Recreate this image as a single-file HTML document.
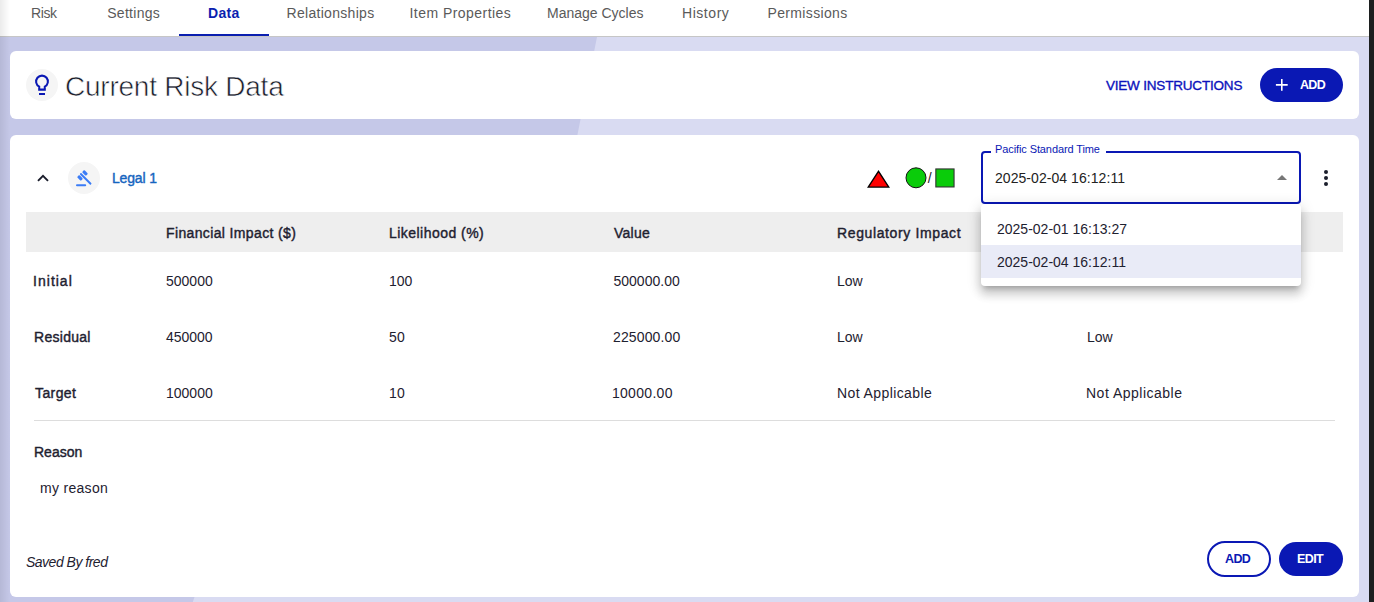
<!DOCTYPE html>
<html><head><meta charset="utf-8">
<style>
*{box-sizing:border-box;margin:0;padding:0}
html,body{width:1374px;height:602px;overflow:hidden;background:#fff}
body{font-family:"Liberation Sans",sans-serif;color:#222;position:relative}
.abs{position:absolute;white-space:nowrap}
#bg{position:absolute;left:0;top:37px;width:1369px;height:565px;background:#d9dbf2}
#bgdark{position:absolute;left:0;top:0;width:1369px;height:565px;background:#c5c8e8;
  clip-path:polygon(0 0,597px 0,577.4px 98px,194.5px 560px,192.8px 565px,0 565px)}
#tabs{position:absolute;left:0;top:0;width:1369px;height:37px;background:#fff;border-bottom:1px solid #c6c6c6}
.tab{position:absolute;top:5px;font-size:14px;color:#5a5a5a;white-space:nowrap}
.tab.act{color:#0b1fb0;font-weight:bold}
#uline{position:absolute;left:179px;top:34px;width:90px;height:2px;background:#0b1fb0}
#lshadow{position:absolute;left:0;top:0;width:10px;height:602px;background:linear-gradient(to right,rgba(0,0,0,.08),rgba(0,0,0,0))}
#scroll{position:absolute;left:1369px;top:0;width:5px;height:602px;background:#1c1f1f}
.card{position:absolute;left:10px;width:1349px;background:#fff;border-radius:6px}
#card1{top:51px;height:68px}
#card2{top:135px;height:462px}
.icirc{position:absolute;width:32px;height:32px;border-radius:50%;background:#f5f5f5}
.sb{font-weight:normal;-webkit-text-stroke:0.4px currentColor}
.th{position:absolute;top:225px;font-size:14px;color:#1e2130;white-space:nowrap}
.td{position:absolute;font-size:14px;color:#1e2130;white-space:nowrap}
</style></head><body>
<div id="bg"><div id="bgdark"></div></div>
<div id="tabs">
  <div class="tab" id="t_risk" style="left:31px;letter-spacing:-0.401px">Risk</div>
  <div class="tab" id="t_set" style="left:107.2px;letter-spacing:0.288px">Settings</div>
  <div class="tab act" id="t_data" style="left:208px;letter-spacing:0.334px">Data</div>
  <div class="tab" id="t_rel" style="left:286.5px;letter-spacing:0.299px">Relationships</div>
  <div class="tab" id="t_item" style="left:409.5px;letter-spacing:0.46px">Item Properties</div>
  <div class="tab" id="t_man" style="left:547px;letter-spacing:0.002px">Manage Cycles</div>
  <div class="tab" id="t_hist" style="left:682px;letter-spacing:0.549px">History</div>
  <div class="tab" id="t_perm" style="left:767.5px;letter-spacing:0.35px">Permissions</div>
  <div id="uline"></div>
</div>
<div id="lshadow"></div>
<div class="card" id="card1"></div>
<div class="card" id="card2"></div>

<!-- card 1 -->
<div class="icirc" style="left:26px;top:69px"></div>
<svg class="abs" style="left:27px;top:70px" width="30" height="30" viewBox="0 0 30 30"><path d="M12.2 16.7 A5.9 5.9 0 1 1 17.8 16.7 V19.6 H12.2 Z" fill="none" stroke="#0a18b4" stroke-width="2.05"/><rect x="12" y="23" width="6" height="2" fill="#0a18b4"/></svg>
<div class="abs" id="title" style="left:65px;top:71px;font-size:28px;color:#1a1d2b;-webkit-text-stroke:0.6px #fff;letter-spacing:-0.236px">Current Risk Data</div>
<div class="abs sb" id="viewins" style="left:1105.9px;top:78px;font-size:13.5px;color:#0c12bc;-webkit-text-stroke:0.35px #0c12bc;letter-spacing:-0.187px">VIEW INSTRUCTIONS</div>
<div class="abs" style="left:1260px;top:68px;width:83px;height:34px;background:#0a18b4;border-radius:17px"></div>
<svg class="abs" style="left:1260px;top:68px" width="83" height="34" viewBox="0 0 83 34"><path d="M21.8 11 V22.8 M15.9 16.9 H27.7" stroke="#fff" stroke-width="1.6"/></svg>
<div class="abs" id="addtop" style="left:1300px;top:78px;font-size:12.5px;font-weight:bold;color:#fff;letter-spacing:-0.7px">ADD</div>

<!-- card 2 header -->
<svg class="abs" style="left:30px;top:165px" width="26" height="26" viewBox="0 0 26 26"><path d="M8 15.9 L13 10.9 L18 15.9" fill="none" stroke="#1a1d2b" stroke-width="1.9"/></svg>
<div class="icirc" style="left:68px;top:162px"></div>
<svg class="abs" style="left:70px;top:163px" width="30" height="30" viewBox="0 0 30 30"><g transform="rotate(45)" fill="#3b7cf6"><rect x="14.9" y="-5.2" width="5.4" height="3.2" rx="1"/><rect x="14.9" y="1.9" width="5.4" height="3.2" rx="1"/><rect x="14.65" y="-0.9" width="15.3" height="2" rx="0.8"/></g><rect x="6" y="21.2" width="10.2" height="2" rx="1" fill="#3b7cf6"/></svg>
<div class="abs sb" id="legal" style="left:112px;top:169.5px;font-size:14px;color:#1565c0;letter-spacing:-0.168px">Legal 1</div>

<svg class="abs" style="left:860px;top:160px" width="100" height="35" viewBox="0 0 100 35"><path d="M8.2 27.1 L18.5 11.3 L28.8 27.1 Z" fill="#ff0000" stroke="#000" stroke-width="1.3" stroke-linejoin="miter"/><circle cx="56" cy="17.8" r="10" fill="#0acc0a" stroke="#111" stroke-width="1"/><rect x="75.85" y="8.95" width="18.2" height="18" fill="#0acc0a" stroke="#333" stroke-width="1.1"/></svg>
<div class="abs" style="left:927.8px;top:169.5px;font-size:14px;color:#222">/</div>

<!-- table -->
<div class="abs" style="left:26px;top:212px;width:1317px;height:40px;background:#eeeeee"></div>
<div class="th sb" id="h1" style="left:166px;letter-spacing:0.367px">Financial Impact ($)</div>
<div class="th sb" id="h2" style="left:389px;letter-spacing:0.461px">Likelihood (%)</div>
<div class="th sb" id="h3" style="left:614px;letter-spacing:0.25px">Value</div>
<div class="th sb" id="h4" style="left:837px;letter-spacing:0.624px">Regulatory Impact</div>

<div class="td sb" id="r1" style="left:33.1px;top:273px;letter-spacing:0.999px">Initial</div>
<div class="td" style="left:166px;top:273px">500000</div>
<div class="td" style="left:389px;top:273px">100</div>
<div class="td" id="v1" style="left:613.4px;top:273px;letter-spacing:0.029px">500000.00</div>
<div class="td" style="left:837px;top:273px">Low</div>

<div class="td sb" id="r2" style="left:34px;top:329px;letter-spacing:0.287px">Residual</div>
<div class="td" id="f2" style="left:166px;top:329px;letter-spacing:-0.04px">450000</div>
<div class="td" id="l2" style="left:389px;top:329px;letter-spacing:0.1px">50</div>
<div class="td" id="v2" style="left:613px;top:329px;letter-spacing:0.126px">225000.00</div>
<div class="td" style="left:837px;top:329px">Low</div>
<div class="td" style="left:1087px;top:329px">Low</div>

<div class="td sb" id="r3" style="left:35px;top:385px;letter-spacing:0.4px">Target</div>
<div class="td" style="left:166px;top:385px">100000</div>
<div class="td" id="l3" style="left:389px;top:385px;letter-spacing:0.1px">10</div>
<div class="td" id="v3" style="left:611.9px;top:385px;letter-spacing:0.313px">10000.00</div>
<div class="td" id="na1" style="left:837px;top:385px;letter-spacing:0.407px">Not Applicable</div>
<div class="td" id="na2" style="left:1086px;top:385px;letter-spacing:0.497px">Not Applicable</div>

<div class="abs" style="left:34px;top:420px;width:1301px;height:1px;background:#dddddd"></div>
<div class="td sb" id="reason" style="left:34px;top:444px;letter-spacing:-0px">Reason</div>
<div class="td" id="myreason" style="left:40px;top:480px;letter-spacing:0.305px">my reason</div>
<div class="td" id="saved" style="left:26px;top:554px;font-style:italic;letter-spacing:-0.501px">Saved By fred</div>

<div class="abs" style="left:1207px;top:541px;width:64px;height:36px;border:2px solid #0a18b4;border-radius:18px"></div>
<div class="abs" id="add2" style="left:1225px;top:552px;font-size:12.5px;font-weight:bold;color:#0a18b4;letter-spacing:-0.6px">ADD</div>
<div class="abs" style="left:1279px;top:542px;width:64px;height:34px;background:#0a18b4;border-radius:17px"></div>
<div class="abs" id="edit" style="left:1297px;top:552px;font-size:12.5px;font-weight:bold;color:#fff;letter-spacing:-0.602px">EDIT</div>

<!-- select -->
<div class="abs" style="left:981px;top:151px;width:320px;height:53px;border:2px solid #0a18b4;border-radius:4px"></div>
<div class="abs" style="left:991px;top:145px;width:115px;height:10px;background:#fff"></div>
<div class="abs" id="label" style="left:995px;top:143px;font-size:11px;color:#0a18b4;letter-spacing:-0.1px">Pacific Standard Time</div>
<div class="abs" id="selval" style="left:995px;top:170px;font-size:14px;color:#222;letter-spacing:0.056px">2025-02-04 16:12:11</div>
<svg class="abs" style="left:1276px;top:174px" width="12" height="7" viewBox="0 0 12 7"><path d="M1 6 L6 1 L11 6 Z" fill="#777"/></svg>
<svg class="abs" style="left:1320px;top:166px" width="12" height="22" viewBox="0 0 12 22"><circle cx="6" cy="6.1" r="2" fill="#1b1e2c"/><circle cx="6" cy="12.1" r="2" fill="#1b1e2c"/><circle cx="6" cy="18.1" r="2" fill="#1b1e2c"/></svg>

<!-- dropdown menu -->
<div class="abs" style="left:981px;top:204px;width:320px;height:82px;background:#fff;border-radius:4px;box-shadow:0px 5px 5px -3px rgba(0,0,0,0.2),0px 8px 10px 1px rgba(0,0,0,0.14),0px 3px 14px 2px rgba(0,0,0,0.12)"></div>
<div class="abs" style="left:981px;top:245px;width:320px;height:33px;background:#e9ebf7"></div>
<div class="abs" id="m1" style="left:997px;top:221px;font-size:14px;color:#1e2130">2025-02-01 16:13:27</div>
<div class="abs" id="m2" style="left:997px;top:254px;font-size:14px;color:#1e2130">2025-02-04 16:12:11</div>

<div id="scroll"></div>
</body></html>
